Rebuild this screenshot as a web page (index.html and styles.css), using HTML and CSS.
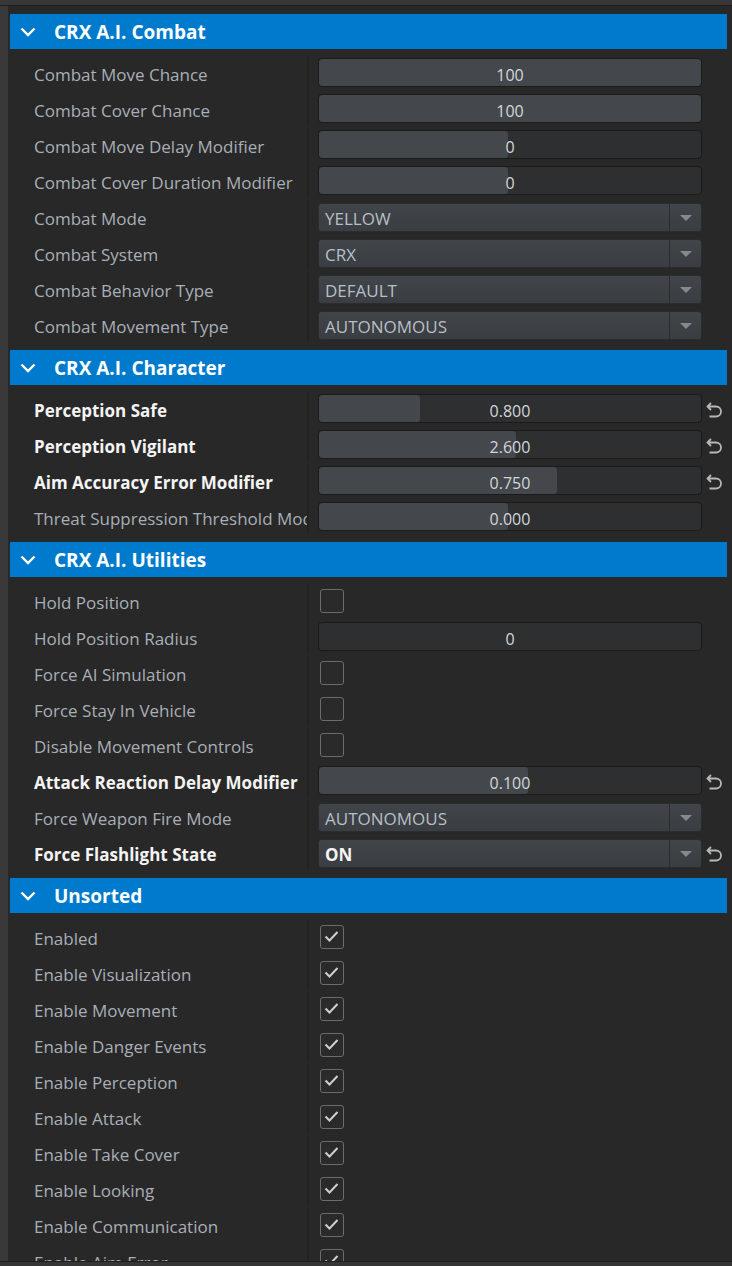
FILE: index.html
```html
<!DOCTYPE html>
<html>
<head>
<meta charset="utf-8">
<link rel="stylesheet" href="styles.css">
</head>
<body>
<div class="frame">
  <div class="topbar"></div>
  <div class="main">
    <div class="leftstrip"></div>
    <div class="panel">

      <div class="section">
        <div class="hdr"><svg class="chev" viewBox="0 0 16 16"><path d="M1.5 4.5 L8 11 L14.5 4.5"/></svg><span>CRX A.I. Combat</span></div>
        <div class="rows">
          <div class="row"><div class="lbl">Combat Move Chance</div><div class="ctl"><div class="slider"><div class="fill" style="width:100%"></div><span class="val">100</span></div></div><div class="rst"></div></div>
          <div class="row"><div class="lbl">Combat Cover Chance</div><div class="ctl"><div class="slider"><div class="fill" style="width:100%"></div><span class="val">100</span></div></div><div class="rst"></div></div>
          <div class="row"><div class="lbl">Combat Move Delay Modifier</div><div class="ctl"><div class="slider"><div class="fill" style="width:49.6%"></div><span class="val">0</span></div></div><div class="rst"></div></div>
          <div class="row"><div class="lbl">Combat Cover Duration Modifier</div><div class="ctl"><div class="slider"><div class="fill" style="width:49.6%"></div><span class="val">0</span></div></div><div class="rst"></div></div>
          <div class="row"><div class="lbl">Combat Mode</div><div class="ctl"><div class="dd"><span class="ddv">YELLOW</span><span class="ddarrow"><i></i></span></div></div><div class="rst"></div></div>
          <div class="row"><div class="lbl">Combat System</div><div class="ctl"><div class="dd"><span class="ddv">CRX</span><span class="ddarrow"><i></i></span></div></div><div class="rst"></div></div>
          <div class="row"><div class="lbl">Combat Behavior Type</div><div class="ctl"><div class="dd"><span class="ddv">DEFAULT</span><span class="ddarrow"><i></i></span></div></div><div class="rst"></div></div>
          <div class="row"><div class="lbl">Combat Movement Type</div><div class="ctl"><div class="dd"><span class="ddv">AUTONOMOUS</span><span class="ddarrow"><i></i></span></div></div><div class="rst"></div></div>
        </div>
      </div>

      <div class="section">
        <div class="hdr"><svg class="chev" viewBox="0 0 16 16"><path d="M1.5 4.5 L8 11 L14.5 4.5"/></svg><span>CRX A.I. Character</span></div>
        <div class="rows">
          <div class="row"><div class="lbl bold">Perception Safe</div><div class="ctl"><div class="slider"><div class="fill" style="width:26.5%"></div><span class="val">0.800</span></div></div><div class="rst"><svg viewBox="0 0 17 17"><path d="M5 1 L1.5 4.5 L5 8 M2 4.5 H10 A5 5 0 0 1 10 14.5 H3.5"/></svg></div></div>
          <div class="row"><div class="lbl bold">Perception Vigilant</div><div class="ctl"><div class="slider"><div class="fill" style="width:51.6%"></div><span class="val">2.600</span></div></div><div class="rst"><svg viewBox="0 0 17 17"><path d="M5 1 L1.5 4.5 L5 8 M2 4.5 H10 A5 5 0 0 1 10 14.5 H3.5"/></svg></div></div>
          <div class="row"><div class="lbl bold">Aim Accuracy Error Modifier</div><div class="ctl"><div class="slider"><div class="fill" style="width:62.3%"></div><span class="val">0.750</span></div></div><div class="rst"><svg viewBox="0 0 17 17"><path d="M5 1 L1.5 4.5 L5 8 M2 4.5 H10 A5 5 0 0 1 10 14.5 H3.5"/></svg></div></div>
          <div class="row"><div class="lbl">Threat Suppression Threshold Modifier</div><div class="ctl"><div class="slider"><div class="fill" style="width:49.6%"></div><span class="val">0.000</span></div></div><div class="rst"></div></div>
        </div>
      </div>

      <div class="section">
        <div class="hdr"><svg class="chev" viewBox="0 0 16 16"><path d="M1.5 4.5 L8 11 L14.5 4.5"/></svg><span>CRX A.I. Utilities</span></div>
        <div class="rows">
          <div class="row"><div class="lbl">Hold Position</div><div class="ctl"><div class="cb"></div></div><div class="rst"></div></div>
          <div class="row"><div class="lbl">Hold Position Radius</div><div class="ctl"><div class="slider"><span class="val">0</span></div></div><div class="rst"></div></div>
          <div class="row"><div class="lbl">Force AI Simulation</div><div class="ctl"><div class="cb"></div></div><div class="rst"></div></div>
          <div class="row"><div class="lbl">Force Stay In Vehicle</div><div class="ctl"><div class="cb"></div></div><div class="rst"></div></div>
          <div class="row"><div class="lbl">Disable Movement Controls</div><div class="ctl"><div class="cb"></div></div><div class="rst"></div></div>
          <div class="row"><div class="lbl bold">Attack Reaction Delay Modifier</div><div class="ctl"><div class="slider"><div class="fill" style="width:54.7%"></div><span class="val">0.100</span></div></div><div class="rst"><svg viewBox="0 0 17 17"><path d="M5 1 L1.5 4.5 L5 8 M2 4.5 H10 A5 5 0 0 1 10 14.5 H3.5"/></svg></div></div>
          <div class="row"><div class="lbl">Force Weapon Fire Mode</div><div class="ctl"><div class="dd"><span class="ddv">AUTONOMOUS</span><span class="ddarrow"><i></i></span></div></div><div class="rst"></div></div>
          <div class="row"><div class="lbl bold">Force Flashlight State</div><div class="ctl"><div class="dd"><span class="ddv bold">ON</span><span class="ddarrow"><i></i></span></div></div><div class="rst"><svg viewBox="0 0 17 17"><path d="M5 1 L1.5 4.5 L5 8 M2 4.5 H10 A5 5 0 0 1 10 14.5 H3.5"/></svg></div></div>
        </div>
      </div>

      <div class="section">
        <div class="hdr"><svg class="chev" viewBox="0 0 16 16"><path d="M1.5 4.5 L8 11 L14.5 4.5"/></svg><span>Unsorted</span></div>
        <div class="rows">
          <div class="row"><div class="lbl">Enabled</div><div class="ctl"><div class="cb"><svg viewBox="0 0 21 21"><path d="M4.5 10.5 L8.5 14.5 L16.5 6"/></svg></div></div><div class="rst"></div></div>
          <div class="row"><div class="lbl">Enable Visualization</div><div class="ctl"><div class="cb"><svg viewBox="0 0 21 21"><path d="M4.5 10.5 L8.5 14.5 L16.5 6"/></svg></div></div><div class="rst"></div></div>
          <div class="row"><div class="lbl">Enable Movement</div><div class="ctl"><div class="cb"><svg viewBox="0 0 21 21"><path d="M4.5 10.5 L8.5 14.5 L16.5 6"/></svg></div></div><div class="rst"></div></div>
          <div class="row"><div class="lbl">Enable Danger Events</div><div class="ctl"><div class="cb"><svg viewBox="0 0 21 21"><path d="M4.5 10.5 L8.5 14.5 L16.5 6"/></svg></div></div><div class="rst"></div></div>
          <div class="row"><div class="lbl">Enable Perception</div><div class="ctl"><div class="cb"><svg viewBox="0 0 21 21"><path d="M4.5 10.5 L8.5 14.5 L16.5 6"/></svg></div></div><div class="rst"></div></div>
          <div class="row"><div class="lbl">Enable Attack</div><div class="ctl"><div class="cb"><svg viewBox="0 0 21 21"><path d="M4.5 10.5 L8.5 14.5 L16.5 6"/></svg></div></div><div class="rst"></div></div>
          <div class="row"><div class="lbl">Enable Take Cover</div><div class="ctl"><div class="cb"><svg viewBox="0 0 21 21"><path d="M4.5 10.5 L8.5 14.5 L16.5 6"/></svg></div></div><div class="rst"></div></div>
          <div class="row"><div class="lbl">Enable Looking</div><div class="ctl"><div class="cb"><svg viewBox="0 0 21 21"><path d="M4.5 10.5 L8.5 14.5 L16.5 6"/></svg></div></div><div class="rst"></div></div>
          <div class="row"><div class="lbl">Enable Communication</div><div class="ctl"><div class="cb"><svg viewBox="0 0 21 21"><path d="M4.5 10.5 L8.5 14.5 L16.5 6"/></svg></div></div><div class="rst"></div></div>
          <div class="row"><div class="lbl">Enable Aim Error</div><div class="ctl"><div class="cb"><svg viewBox="0 0 21 21"><path d="M4.5 10.5 L8.5 14.5 L16.5 6"/></svg></div></div><div class="rst"></div></div>
        </div>
      </div>

    </div>
  </div>
  <div class="bottombar"></div>
</div>
</body>
</html>
```

FILE: styles.css
```css
* { box-sizing: border-box; }
html, body { margin: 0; padding: 0; }
body {
  background: #353535;
  font-family: "Open Sans", "Noto Sans", sans-serif;
  font-size: 17px;
}
.frame {
  width: 732px;
  height: 1266px;
  display: flex;
  flex-direction: column;
  overflow: hidden;
}
.topbar {
  height: 6px;
  flex: none;
  background: #383838;
  border-bottom: 1px solid #1f1f1f;
}
.main {
  flex: 1;
  min-height: 0;
  display: flex;
  overflow: hidden;
}
.leftstrip {
  width: 8px;
  flex: none;
  background: #393939;
}
.panel {
  flex: 1;
  background: #282828;
  padding: 8px 5px 0 2px;
  overflow: hidden;
}
.bottombar {
  height: 5px;
  flex: none;
  background: #353535;
  border-top: 1px solid #1e1e1e;
}
.section { margin-bottom: 6px; }
.hdr {
  height: 35px;
  background: #007acc;
  display: flex;
  align-items: center;
  color: #ffffff;
  font-weight: 700;
  font-size: 19px;
}
.chev {
  width: 16px;
  height: 16px;
  margin-left: 10px;
  margin-right: 18px;
  fill: none;
  stroke: #ffffff;
  stroke-width: 2.4;
}
.rows { padding-top: 7px; }
.row {
  height: 36px;
  display: flex;
}
.lbl {
  width: 299px;
  height: 35px;
  flex: none;
  padding-left: 24px;
  line-height: 37px;
  color: #a8afb7;
  white-space: nowrap;
  overflow: hidden;
  border-right: 2px solid #222222;
}
.lbl.bold { color: #f4f4f4; font-weight: 700; }
.ctl {
  width: 384px;
  flex: none;
  margin-left: 9px;
  display: flex;
  align-items: flex-start;
}
.slider {
  position: relative;
  width: 384px;
  height: 29px;
  margin-top: 2px;
  background: #2e2f31;
  border: 1px solid #1a1a1b;
  border-radius: 4px;
  overflow: hidden;
}
.fill {
  height: 100%;
  background: #44474b;
  border-radius: 3px;
}
.val {
  position: absolute;
  left: 0; right: 0; top: 0;
  line-height: 29px;
  padding-top: 2px;
  font-size: 16px;
  text-align: center;
  color: #d2d6da;
}
.dd {
  width: 384px;
  height: 29px;
  margin-top: 3px;
  display: flex;
  background: linear-gradient(#414448, #3a3d41);
  border: 1px solid #2b2c2e;
  border-radius: 3px;
  color: #b7bfc7;
}
.ddv {
  flex: 1;
  padding-left: 6px;
  line-height: 29px;
}
.ddv.bold { color: #f4f4f4; font-weight: 700; }
.ddarrow {
  width: 32px;
  border-left: 1px solid #2b2c2e;
  display: flex;
  align-items: center;
  justify-content: center;
}
.ddarrow i {
  width: 0; height: 0;
  border-left: 6px solid transparent;
  border-right: 6px solid transparent;
  border-top: 6px solid #86898c;
}
.cb {
  width: 24px;
  height: 24px;
  margin-top: 5px;
  margin-left: 2px;
  border: 1.5px solid #6c6c6c;
  border-radius: 3px;
  background: #2a2a2a;
}
.cb svg {
  display: block;
  width: 21px;
  height: 21px;
  fill: none;
  stroke: #cfcfcf;
  stroke-width: 2;
}
.rst {
  width: 20px;
  flex: none;
  margin-left: 2px;
  display: flex;
  align-items: center;
  justify-content: center;
}
.rst svg {
  width: 17px;
  height: 17px;
  fill: none;
  stroke: #b4b8bc;
  stroke-width: 1.8;
}
```
